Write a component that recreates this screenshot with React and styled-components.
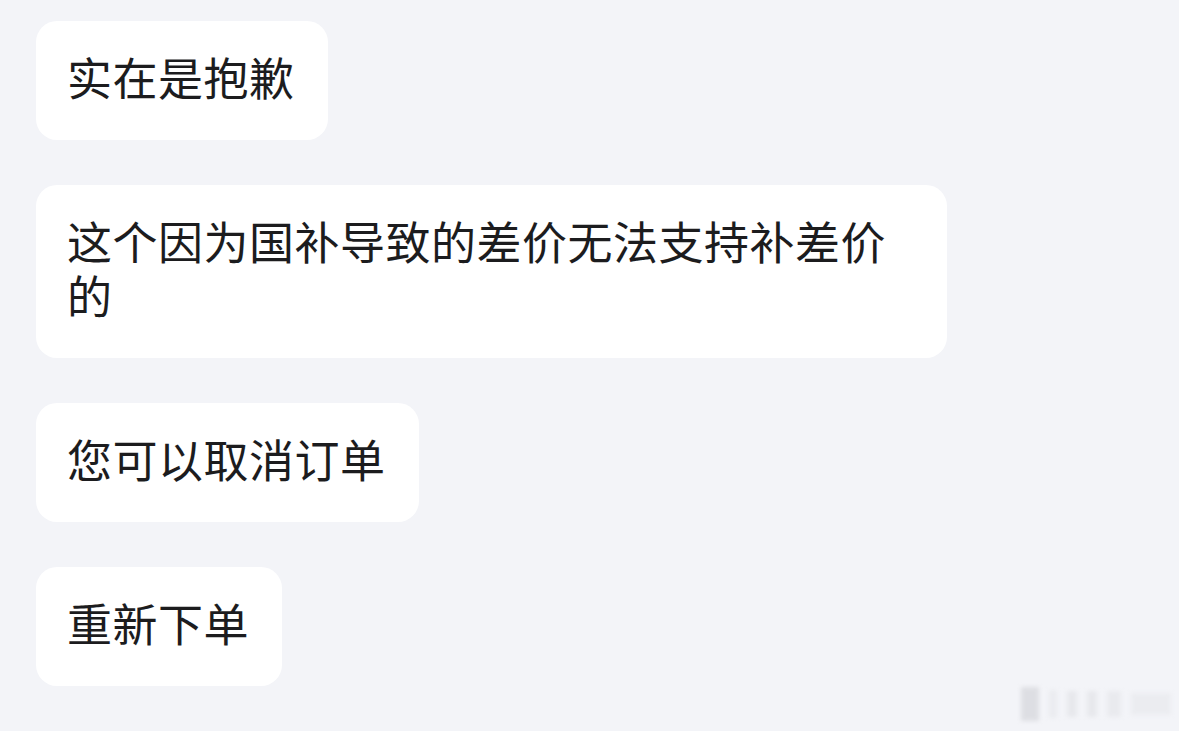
import React from "react"
import styled, { createGlobalStyle } from "styled-components"

const GlobalStyle = createGlobalStyle`
  html, body {
    margin: 0;
    padding: 0;
    background: #f3f4f8;
  }
`

const Page = styled.div`
  position: relative;
  width: 1179px;
  height: 731px;
  box-sizing: border-box;
  padding: 21px 0 0 36px;
  background: #f3f4f8;
  display: flex;
  flex-direction: column;
  align-items: flex-start;
  gap: 45px;
  overflow: hidden;
  font-family: "Noto Sans CJK SC", "Noto Sans", sans-serif;
`

const Bubble = styled.div`
  box-sizing: border-box;
  max-width: 911px;
  padding: 29px 33px 36px 31px;
  background: #ffffff;
  border-radius: 21px;
  color: #1c1c1e;
  font-size: 45px;
  font-weight: 400;
  letter-spacing: 0.5px;
  line-height: 54px;
  word-break: break-all;
`

const Watermark = styled.div`
  position: absolute;
  right: 8px;
  bottom: 10px;
  display: flex;
  align-items: center;
  gap: 10px;
  filter: blur(2px);
  opacity: 0.5;
`

const Mark = styled.span`
  display: block;
  width: ${({ w }) => w}px;
  height: ${({ h }) => h}px;
  background: ${({ c }) => c};
`

const messages = [
  "实在是抱歉",
  "这个因为国补导致的差价无法支持补差价的",
  "您可以取消订单",
  "重新下单",
]

const App = () => (
  <>
    <GlobalStyle />
    <Page>
      {messages.map((m) => (
        <Bubble key={m}>{m}</Bubble>
      ))}
      <Watermark>
        <Mark w={18} h={34} c="#c9cacf" />
        <Mark w={8} h={28} c="#e2e3e7" />
        <Mark w={10} h={26} c="#dcdde1" />
        <Mark w={10} h={26} c="#dcdde1" />
        <Mark w={14} h={26} c="#e0e1e5" />
        <Mark w={40} h={22} c="#e4e5e9" />
      </Watermark>
    </Page>
  </>
)

export default App
